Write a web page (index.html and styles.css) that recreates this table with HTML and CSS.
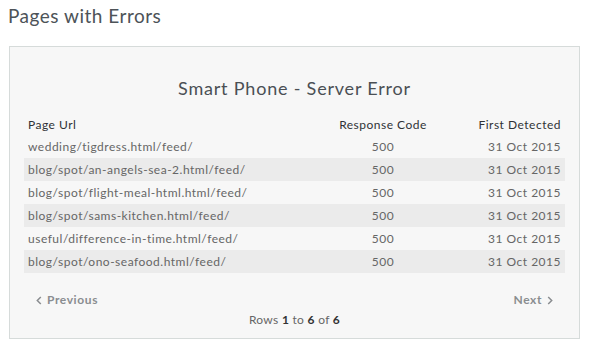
FILE: index.html
```html
<!DOCTYPE html>
<html>
<head>
<meta charset="utf-8">
<link rel="stylesheet" href="styles.css">
</head>
<body>
<h1 class="page-title">Pages with Errors</h1>
<section class="panel">
  <h2 class="panel-title">Smart Phone - Server Error</h2>
  <table class="errors">
    <thead>
      <tr><th class="c-url">Page Url</th><th class="c-code">Response Code</th><th class="c-date">First Detected</th></tr>
    </thead>
    <tbody>
      <tr><td class="c-url">wedding/tigdress.html/feed/</td><td class="c-code">500</td><td class="c-date">31 Oct 2015</td></tr>
      <tr><td class="c-url">blog/spot/an-angels-sea-2.html/feed/</td><td class="c-code">500</td><td class="c-date">31 Oct 2015</td></tr>
      <tr><td class="c-url">blog/spot/flight-meal-html.html/feed/</td><td class="c-code">500</td><td class="c-date">31 Oct 2015</td></tr>
      <tr><td class="c-url">blog/spot/sams-kitchen.html/feed/</td><td class="c-code">500</td><td class="c-date">31 Oct 2015</td></tr>
      <tr><td class="c-url">useful/difference-in-time.html/feed/</td><td class="c-code">500</td><td class="c-date">31 Oct 2015</td></tr>
      <tr><td class="c-url">blog/spot/ono-seafood.html/feed/</td><td class="c-code">500</td><td class="c-date">31 Oct 2015</td></tr>
    </tbody>
  </table>
  <div class="pager">
    <span class="pager-link"><svg class="chev" width="6" height="9" viewBox="0 0 6 9"><path d="M4.8 1 L1.3 4.5 L4.8 8" fill="none" stroke="currentColor" stroke-width="1.5"/></svg>Previous</span>
    <span class="pager-link">Next<svg class="chev chev-r" width="6" height="9" viewBox="0 0 6 9"><path d="M1.2 1 L4.7 4.5 L1.2 8" fill="none" stroke="currentColor" stroke-width="1.5"/></svg></span>
  </div>
  <p class="pager-count">Rows <b>1</b> to <b>6</b> of <b>6</b></p>
</section>
</body>
</html>
```
FILE: styles.css
```css
html, body {
  margin: 0;
  padding: 0;
  background: #fff;
}
body {
  padding: 0 8px;
  font-family: "Lato", "Open Sans", sans-serif;
  color: #555;
}
.page-title {
  margin: 4px 0 0;
  font-size: 19px;
  line-height: 24px;
  font-weight: 400;
  color: #4d5358;
  letter-spacing: 0.5px;
}
.panel {
  box-sizing: border-box;
  width: 571px;
  margin: 18px 0 0 1px;
  padding: 29px 14px 10px;
  background: #f7f7f7;
  border: 1px solid #d6dbda;
}
.panel-title {
  margin: 0 0 13px;
  font-size: 18px;
  line-height: 24px;
  font-weight: 400;
  text-align: center;
  color: #4a4f54;
  letter-spacing: 0.8px;
}
.errors {
  width: 541px;
  border-collapse: collapse;
  font-size: 12px;
  letter-spacing: 0.5px;
}
.errors th {
  height: 22px;
  padding: 0 4px;
  font-weight: 400;
  color: #2f3236;
}
.errors td {
  height: 23px;
  padding: 0 4px;
  color: #666;
}
.errors tbody tr:nth-child(even) td {
  background: #ebebeb;
}
.c-url { text-align: left; width: 298px; }
.c-code { text-align: center; width: 98px; }
.c-date { text-align: right; }
.pager {
  display: flex;
  justify-content: space-between;
  width: 541px;
  box-sizing: border-box;
  padding: 0 12px;
  margin-top: 19px;
  font-size: 12px;
  line-height: 16px;
  letter-spacing: 0.6px;
}
.pager-link {
  display: flex;
  align-items: center;
  gap: 5px;
  font-weight: 700;
  color: #8a8d90;
}
.chev {
  display: block;
}
.pager-count {
  width: 541px;
  margin: 4px 0 0;
  text-align: center;
  font-size: 12px;
  line-height: 16px;
  color: #666;
  letter-spacing: 0.3px;
}
.pager-count b {
  color: #333;
  font-weight: 700;
}
```
